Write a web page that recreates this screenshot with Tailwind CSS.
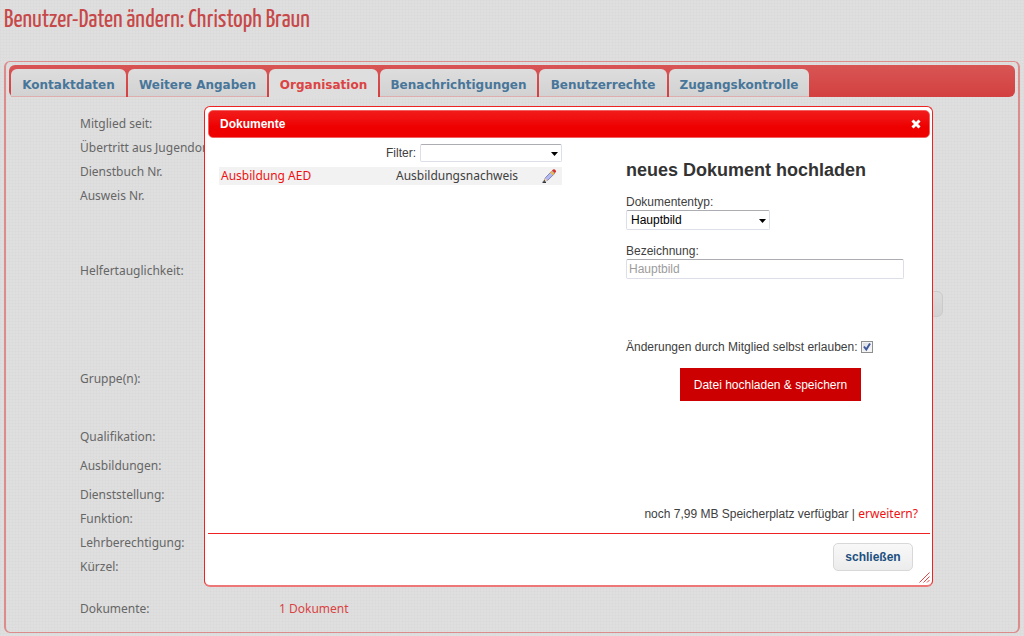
<!DOCTYPE html>
<html lang="de">
<head>
<meta charset="utf-8">
<meta name="viewport" content="width=device-width, initial-scale=1">
<title>Benutzer-Daten ändern</title>
<script src="https://cdn.jsdelivr.net/npm/@tailwindcss/browser@4"></script>
</head>
<body class="relative min-h-screen bg-[#dfdfdf] bg-[repeating-linear-gradient(0deg,#00000003_0_1px,transparent_1px_3px),repeating-linear-gradient(90deg,#00000003_0_1px,transparent_1px_3px)] px-1 pb-1 font-['Noto_Sans',Verdana,sans-serif] text-[12px] text-[#666666]">
<h1 class="h-[61px] pt-1 font-['Yanone_Kaffeesatz','Roboto_Condensed','Open_Sans_Condensed','Liberation_Sans',sans-serif] text-[25px] leading-[34px] text-[#c74848]">Benutzer-Daten ändern: Christoph Braun</h1>

<main class="rounded-md border-x-2 border-y border-[#dd8c8c] px-[3px] pt-[3px] pb-[11px]">
  <nav class="flex h-8 items-end gap-[2px] rounded-md bg-linear-to-b from-[#d85555] to-[#d34040] pl-[2px] font-['DejaVu_Sans',Verdana,sans-serif] text-[12px] font-bold whitespace-nowrap text-[#48769a]" aria-label="Bereiche">
    <a href="#kontakt" class="flex h-7 w-[115px] items-center justify-center rounded-t-md border-b border-[#dfadad] bg-linear-to-b from-[#dddddd] to-[#d2d2d2] pt-1">Kontaktdaten</a>
    <a href="#angaben" class="flex h-7 w-[139px] items-center justify-center rounded-t-md border-b border-[#dfadad] bg-linear-to-b from-[#dddddd] to-[#d2d2d2] pt-1">Weitere Angaben</a>
    <a href="#organisation" aria-current="page" class="flex h-7 w-[109px] items-center justify-center rounded-t-md bg-[#dedede] pt-1 text-[#dc4343]">Organisation</a>
    <a href="#nachrichten" class="flex h-7 w-[157px] items-center justify-center rounded-t-md border-b border-[#dfadad] bg-linear-to-b from-[#dddddd] to-[#d2d2d2] pt-1">Benachrichtigungen</a>
    <a href="#rechte" class="flex h-7 w-[128px] items-center justify-center rounded-t-md border-b border-[#dfadad] bg-linear-to-b from-[#dddddd] to-[#d2d2d2] pt-1">Benutzerrechte</a>
    <a href="#zugang" class="flex h-7 w-[140px] items-center justify-center rounded-t-md border-b border-[#dfadad] bg-linear-to-b from-[#dddddd] to-[#d2d2d2] pt-1">Zugangskontrolle</a>
  </nav>
  <div class="flex flex-col pt-[15px] pl-[71px] leading-6 whitespace-nowrap">
    <div>Mitglied seit:</div>
    <div>Übertritt aus Jugendorganisation:</div>
    <div>Dienstbuch Nr.</div>
    <div>Ausweis Nr.</div>
    <div class="mt-[51px]">Helfertauglichkeit:</div>
    <div class="flex h-[84px] items-start justify-end pt-2 pr-[72px]"><button aria-label="Auswählen" class="h-[26px] w-8 rounded-md border border-[#cacaca] bg-linear-to-b from-[#dcdcdc] to-[#d2d2d2]"></button></div>
    <div>Gruppe(n):</div>
    <div class="mt-[34px]">Qualifikation:</div>
    <div class="mt-[5px]">Ausbildungen:</div>
    <div class="mt-[5px]">Dienststellung:</div>
    <div>Funktion:</div>
    <div>Lehrberechtigung:</div>
    <div>Kürzel:</div>
    <div class="mt-[18px] flex"><span class="w-[199px]">Dokumente:</span><a href="#dokumente" class="text-[#d94343]">1 Dokument</a></div>
  </div>
</main>

<section role="dialog" aria-labelledby="dlg-title" class="absolute top-[106px] right-[91px] left-[204px] flex h-[481px] flex-col rounded-md border border-b-2 border-[#ee2222] border-b-[#ed7777] bg-white pt-[3px] pr-[2px] pl-[3px] font-['Liberation_Sans',Arial,sans-serif] text-[12px] text-[#404040]">
  <header class="flex h-7 shrink-0 items-center justify-between rounded-[5px] border border-[#f26060] bg-linear-to-b from-[#f21a1a] to-[#ee0000] to-60% pr-2 pl-[11px] text-white">
    <h2 id="dlg-title" class="font-bold">Dokumente</h2>
    <button aria-label="Dialog schließen"><svg class="size-[10px]" viewBox="0 0 10 10" fill="none" stroke="#fff" stroke-width="3"><path d="M1.5 1.5 8.5 8.5M8.5 1.5 1.5 8.5"/></svg></button>
  </header>
  <div class="flex grow justify-between pr-3 pl-[11px]">
    <div class="w-[343px] pt-[6px]">
      <div class="flex items-center justify-end gap-1">
        <label for="filter">Filter:</label>
        <div class="relative w-[142px]">
          <select id="filter" class="block h-[18px] w-full appearance-none rounded-xs border border-[#dcdfe8] border-t-[#abadb3] bg-white"><option></option></select>
          <svg class="pointer-events-none absolute top-2 right-1 h-1 w-[7px]" viewBox="0 0 7 4"><path d="M0 0h7L3.5 4z" fill="#000"/></svg>
        </div>
      </div>
      <table class="mt-[5px] w-full bg-[#f2f2f2] font-['Noto_Sans',Verdana,sans-serif]">
        <tr class="h-[18px] leading-[18px]">
          <td class="w-[177px] pl-[2px]"><a href="#aed" class="text-[#ee1111]">Ausbildung AED</a></td>
          <td>Ausbildungsnachweis</td>
          <td class="w-5"><button aria-label="Bearbeiten" class="block"><svg class="h-[14px] w-[15px]" viewBox="0 0 14 14"><path d="M0 13.3h3.5" stroke="#222" stroke-width="1.2"/><path d="m1.2 12.6 1.8-4L9.8 1.6l2.7 2.6-7.2 7z" fill="#b4b8f0" stroke="#7476a8" stroke-width=".8"/><path d="m2.6 9.2 2.3 2.2-3.5 1.2z" fill="#f6d6a0"/><path d="m1 13 .6-2 1.2 1.3z" fill="#111"/><path d="m8.4 2.7 2.9 2.8" stroke="#f1b633" stroke-width="2"/><path d="m9.6 1.5 1-.9q1.2-.8 2.3.3t.3 2.3l-.8.9z" fill="#d92d25"/></svg></button></td>
        </tr>
      </table>
    </div>
    <form class="w-[292px] pt-[20px]">
      <h3 class="text-[18px] leading-6 font-bold text-[#333]">neues Dokument hochladen</h3>
      <label for="typ" class="mt-[12px] block leading-4">Dokumententyp:</label>
      <div class="relative w-[144px]">
        <select id="typ" class="block h-5 w-full appearance-none rounded-xs border border-[#dcdfe8] border-t-[#abadb3] bg-white pl-1 text-black"><option>Hauptbild</option></select>
        <svg class="pointer-events-none absolute top-[9px] right-1 h-1 w-[7px]" viewBox="0 0 7 4"><path d="M0 0h7L3.5 4z" fill="#000"/></svg>
      </div>
      <label for="bez" class="mt-[13px] block leading-4">Bezeichnung:</label>
      <input id="bez" type="text" placeholder="Hauptbild" class="block h-5 w-[278px] rounded-xs border border-[#dcdfe8] border-t-[#abadb3] px-[2px] placeholder:text-[#9c9c9c]">
      <div class="mt-[60px] flex items-center gap-1 leading-4">
        <label for="allow">Änderungen durch Mitglied selbst erlauben:</label>
        <span class="relative size-3">
          <input id="allow" type="checkbox" checked class="block size-3 appearance-none border border-[#8e8f8f] bg-linear-to-br from-[#d5d9dd] to-white outline-1 -outline-offset-2 outline-[#f4f4f4]">
          <svg class="pointer-events-none absolute inset-0 size-3" viewBox="0 0 12 12" fill="none" stroke="#40599c" stroke-width="2"><path d="m3 5.5 2.3 3L9 2.5"/></svg>
        </span>
      </div>
      <button type="button" class="mt-[13px] ml-[54px] block h-[33px] w-[181px] bg-[#cc0000] text-white">Datei hochladen &amp; speichern</button>
      <p class="mt-[105px] text-right leading-4 whitespace-nowrap">noch 7,99 MB Speicherplatz verfügbar | <a href="#erweitern" class="font-['Noto_Sans',Verdana,sans-serif] text-[#ee1111]">erweitern?</a></p>
    </form>
  </div>
  <footer class="relative flex h-[52px] shrink-0 items-start justify-end border-t border-[#ee2222] pt-[9px] pr-[17px]">
    <button class="h-7 w-20 rounded-[5px] border border-[#d8d8d8] bg-linear-to-b from-[#f8f8f8] to-[#ececec] font-bold text-[#1c4f80]">schließen</button>
    <svg class="absolute right-0 bottom-[2px] size-[11px]" viewBox="0 0 11 11" stroke="#e94444" stroke-width="1"><path d="M.5 10.5l10-10M4.5 10.5l6-6M8 10.5 10.5 8"/></svg>
  </footer>
</section>
</body>
</html>
